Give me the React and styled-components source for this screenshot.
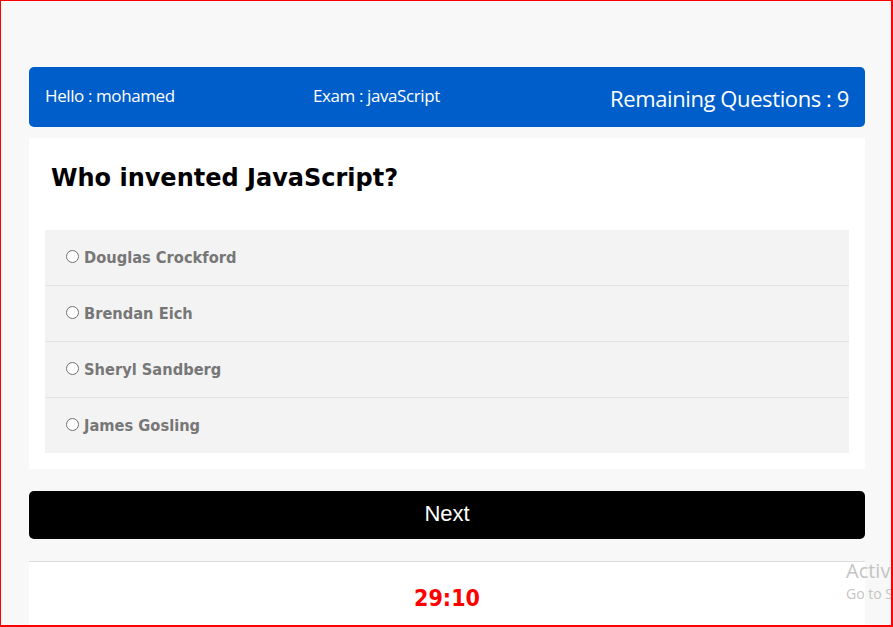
import React, { useState } from 'react';
import styled, { createGlobalStyle } from 'styled-components';

const GlobalStyle = createGlobalStyle`
    html, body {
        margin: 0;
        padding: 0;
        background: #ffffff;
    }
    * {
        box-sizing: border-box;
    }
`

const Frame = styled.div`
    position: relative;
    width: 893px;
    height: 627px;
    overflow: hidden;
    background: #f8f8f8;
    border-style: solid;
    border-color: red;
    border-width: 1px 2px 2px 1px;
    padding: 66px 26px 0 28px;
    font-family: "DejaVu Sans Condensed", "DejaVu Sans", sans-serif;
`

const Container = styled.div`
    width: 836px;
    display: flex;
    flex-direction: column;
`

const Header = styled.div`
    height: 60px;
    background: #005ecb;
    border-radius: 5px;
    color: #ffffff;
    display: grid;
    grid-template-columns: 268px 1fr auto;
    align-items: center;
    padding: 0 16px;
`

const HeaderText = styled.span`
    font-size: ${(props) => props.size}px;
    font-family: "Open Sans", "DejaVu Sans Condensed", sans-serif;
    letter-spacing: -0.4px;
    margin-top: ${(props) => props.shift || 0}px;
`

const Card = styled.div`
    margin-top: 11px;
    background: #ffffff;
    padding: 24px 16px 16px 16px;
`

const Question = styled.h2`
    margin: 0 0 36px 6px;
    font-family: "DejaVu Sans", sans-serif;
    font-size: 24px;
    font-weight: bold;
    color: #000;
    line-height: 32px;
`

const Options = styled.ul`
    list-style: none;
    margin: 0;
    padding: 0;
    background: #f3f3f3;
`

const Option = styled.li`
    height: ${(props) => (props.first ? 55 : 56)}px;
    display: flex;
    align-items: center;
    padding: 0 0 0 21px;
    border-top: ${(props) => (props.first ? 'none' : '1px solid #e3e3e3')};
    color: #777777;
    font-size: 16.3px;
    font-weight: bold;
    cursor: pointer;
`

const Radio = styled.span`
    width: 13px;
    height: 13px;
    border-radius: 50%;
    border: 1px solid #707070;
    background: #fff;
    margin-right: 5px;
    margin-top: -3px;
    flex-shrink: 0;
    display: flex;
    align-items: center;
    justify-content: center;
    &::after {
        content: '';
        width: 7px;
        height: 7px;
        border-radius: 50%;
        background: ${(props) => (props.checked ? '#333' : 'transparent')};
    }
`

const NextButton = styled.button`
    margin-top: 22px;
    height: 48px;
    width: 100%;
    border: none;
    border-radius: 5px;
    background: #000;
    color: #fff;
    font-family: "Liberation Sans", Arial, sans-serif;
    font-size: 22px;
    padding: 0 0 2px 0;
    cursor: pointer;
`

const Footer = styled.div`
    margin-top: 22px;
    height: 80px;
    background: #ffffff;
    border-top: 1px solid #dcdcdc;
    display: flex;
    justify-content: center;
    padding-top: 23px;
`

const Timer = styled.span`
    color: #ff0000;
    font-weight: bold;
    font-size: 23px;
`

const Watermark = styled.div`
    position: absolute;
    left: 845px;
    top: 557px;
    color: #c4c4c4;
    font-family: "Open Sans", sans-serif;
    white-space: nowrap;
    pointer-events: none;
`

const WatermarkTitle = styled.div`
    font-size: 20px;
    line-height: 26px;
`

const WatermarkSub = styled.div`
    font-size: 14px;
    line-height: 20px;
`

const answers = ['Douglas Crockford', 'Brendan Eich', 'Sheryl Sandberg', 'James Gosling'];

export default function App () {
    const [selected, setSelected] = useState(null);

    return (
        <>
            <GlobalStyle />
            <Frame>
                <Container>
                    <Header>
                        <HeaderText size={17} shift={-3}>Hello : mohamed</HeaderText>
                        <HeaderText size={17} shift={-3}>Exam : javaScript</HeaderText>
                        <HeaderText size={22} shift={2}>Remaining Questions : 9</HeaderText>
                    </Header>
                    <Card>
                        <Question>Who invented JavaScript?</Question>
                        <Options>
                            {answers.map((item, index) => (
                                <Option key={item} first={index == 0} onClick={() => setSelected(index)}>
                                    <Radio checked={selected == index} />
                                    {item}
                                </Option>
                            ))}
                        </Options>
                    </Card>
                    <NextButton>Next</NextButton>
                    <Footer>
                        <Timer>29:10</Timer>
                    </Footer>
                </Container>
                <Watermark>
                    <WatermarkTitle>Activate Windows</WatermarkTitle>
                    <WatermarkSub>Go to Settings to activate Windows.</WatermarkSub>
                </Watermark>
            </Frame>
        </>
    )
}
